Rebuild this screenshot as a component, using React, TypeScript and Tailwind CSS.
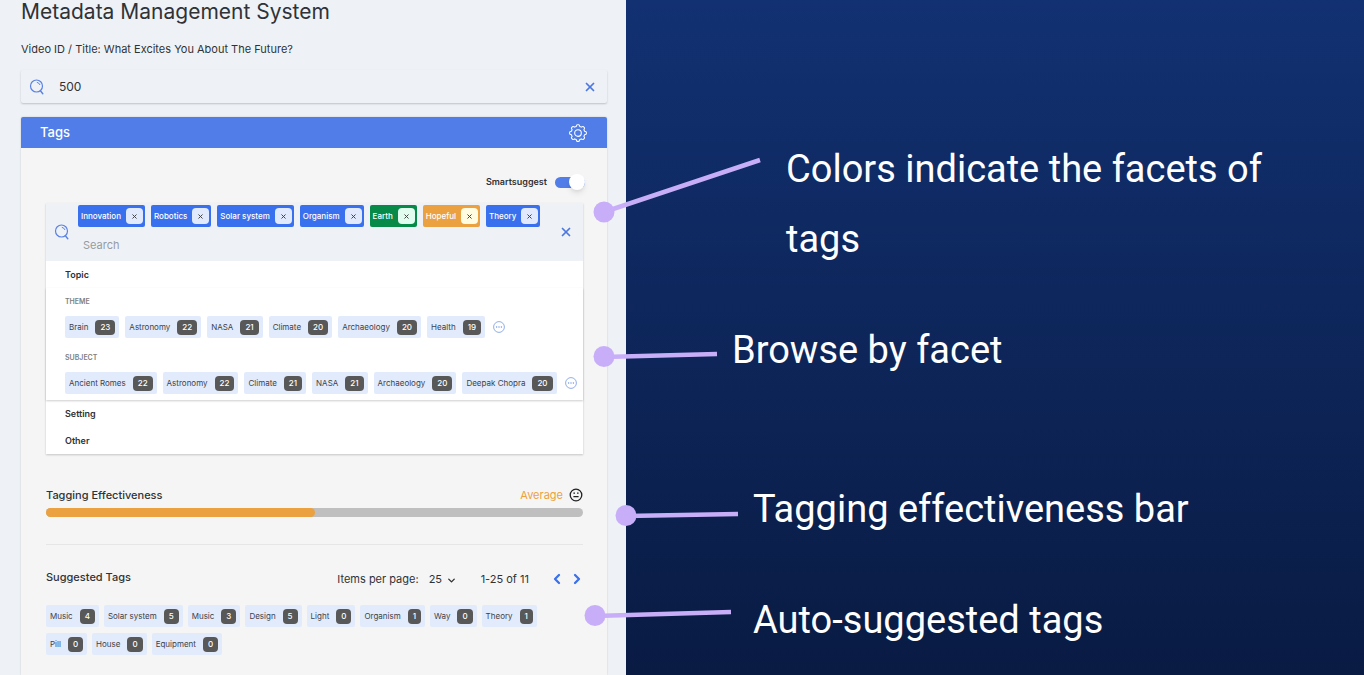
import type { ReactNode } from 'react';
import { ChevronDown, ChevronLeft, ChevronRight, X } from 'lucide-react';

type Count = [string, number];

const selected: { name: string; chip: string; close: string }[] = [
  { name: 'Innovation', chip: 'bg-[#3970ee]', close: 'bg-[#e0eafc]' },
  { name: 'Robotics', chip: 'bg-[#3970ee]', close: 'bg-[#e0eafc]' },
  { name: 'Solar system', chip: 'bg-[#3970ee]', close: 'bg-[#e0eafc]' },
  { name: 'Organism', chip: 'bg-[#3970ee]', close: 'bg-[#e0eafc]' },
  { name: 'Earth', chip: 'bg-[#078a48]', close: 'bg-[#e0fdf0]' },
  { name: 'Hopeful', chip: 'bg-[#eba13f]', close: 'bg-[#fffce2]' },
  { name: 'Theory', chip: 'bg-[#3970ee]', close: 'bg-[#e0eafc]' },
];

const themes: Count[] = [['Brain', 23], ['Astronomy', 22], ['NASA', 21], ['Climate', 20], ['Archaeology', 20], ['Health', 19]];
const subjects: Count[] = [['Ancient Romes', 22], ['Astronomy', 22], ['Climate', 21], ['NASA', 21], ['Archaeology', 20], ['Deepak Chopra', 20]];
const suggested: Count[] = [
  ['Music', 4], ['Solar system', 5], ['Music', 3], ['Design', 5], ['Light', 0], ['Organism', 1],
  ['Way', 0], ['Theory', 1], ['Pill', 0], ['House', 0], ['Equipment', 0],
];

function SearchIcon() {
  return (
    <svg viewBox="0 0 16 16" className="size-4 shrink-0" fill="none" stroke="#5b82e3" strokeLinecap="round" aria-hidden="true">
      <circle cx="7.5" cy="7" r="6" strokeWidth="1.2" />
      <path d="M8.2 3.4a3.6 3.6 0 0 1 2.7 2.2" strokeWidth="1" />
      <path d="M11.6 12l2.2 2.8" strokeWidth="1.4" />
    </svg>
  );
}

function GearIcon() {
  return (
    <svg viewBox="0 0 24 24" className="size-5" fill="none" stroke="white" strokeWidth="1.3" strokeLinejoin="round" aria-hidden="true">
      <circle cx="12" cy="12" r="4" />
      <path d="M9.9 4.1Q10.300 2 11.100 2h1.800q.8 0 1.200 2.100l2 .8q1.700-1.200 2.300-.6l1.300 1.300q.6.6-.6 2.300l.8 2q2.100.4 2.100 1.200v1.800q0 .8-2.100 1.200l-.8 2q1.200 1.700.6 2.300l-1.300 1.300q-.6.6-2.300-.6l-2 .8q-.4 2.100-1.200 2.100h-1.800q-.8 0-1.200-2.100l-2-.8q-1.700 1.200-2.300.6l-1.300-1.300q-.6-.6.6-2.300l-.8-2Q2 13.700 2 12.900v-1.800q0-.8 2.100-1.200l.8-2q-1.200-1.700-.6-2.300l1.300-1.300q.6-.6 2.300.6z" />
    </svg>
  );
}

function MoreButton({ label }: { label: string }) {
  return (
    <button type="button" aria-label={label} className="ml-0.5 shrink-0">
      <svg viewBox="0 0 12 12" className="size-3" aria-hidden="true">
        <circle cx="6" cy="6" r="5.4" fill="none" stroke="#86a5e8" strokeWidth="0.9" />
        <g fill="#7395e4">
          <circle cx="3.6" cy="6" r="0.7" />
          <circle cx="6" cy="6" r="0.7" />
          <circle cx="8.4" cy="6" r="0.7" />
        </g>
      </svg>
    </button>
  );
}

function CountTag({ tag }: { tag: Count }) {
  return (
    <button type="button" className="flex h-[22px] shrink-0 items-center gap-[7px] rounded-xs bg-[#e1ebfc] px-1 text-[8px] text-[#3e4248]">
      {tag[0]}
      <span className="flex h-[15px] items-center rounded-sm bg-[#585858] px-[5px] font-medium text-white">{tag[1]}</span>
    </button>
  );
}

function Facet({ name, tags }: { name: string; tags: Count[] }) {
  return (
    <div>
      <h4 className="text-[7px] leading-3 font-semibold text-[#808080] uppercase">{name}</h4>
      <div className="mt-2 flex items-center gap-1.5">
        {tags.map((t) => <CountTag key={t[0]} tag={t} />)}
        <MoreButton label={`More ${name}`} />
      </div>
    </div>
  );
}

function Note({ className, children }: { className: string; children: ReactNode }) {
  return <p className={`text-[38px] leading-[70px] text-white ${className}`}>{children}</p>;
}

export default function App() {
  return (
    <div className="grid min-h-screen grid-cols-[626fr_738fr] bg-[#eef2f7]">
      <main className="flex flex-col pr-[19px] pl-[21px] font-['Inter',sans-serif] text-[#303236]">
        <h1 className="text-[21px] leading-6">Metadata Management System</h1>
        <p className="mt-4 text-[11px] leading-[18px]">Video ID / Title: What Excites You About The Future?</p>
        <div className="mt-3 flex h-[33px] items-center gap-3.5 rounded-xs pr-2.5 pl-2 shadow-[0_1px_2px_rgba(0,0,0,0.2)]">
          <SearchIcon />
          <input aria-label="Video ID" defaultValue="500" className="min-w-0 flex-1 bg-transparent text-[12px] outline-none" />
          <button type="button" aria-label="Clear video ID" className="text-[#4d78e0]"><X size={14} strokeWidth={3} /></button>
        </div>

        <section className="mt-3.5 flex flex-1 flex-col rounded-t-xs bg-[#f5f5f5] shadow-[0_0_2px_rgba(0,0,0,0.18)]">
          <header className="flex h-[31px] items-center justify-between rounded-t-xs bg-[#507de7] px-[19px] text-white">
            <h2 className="text-[13px] font-medium">Tags</h2>
            <button type="button" aria-label="Tag settings"><GearIcon /></button>
          </header>

          <div className="pt-[25px] pr-6 pb-5 pl-[25px]">
            <label className="-mr-0.5 flex h-[18px] items-center justify-end text-[9px] font-semibold">
              Smartsuggest
              <input type="checkbox" defaultChecked className="peer sr-only" />
              <span className="ml-2 flex h-[11px] w-[30px] items-center justify-start rounded-full bg-[#bfbfbf] peer-checked:justify-end peer-checked:bg-[#507de7]">
                <span className="size-4 shrink-0 rounded-full bg-white shadow-md" />
              </span>
            </label>

            <div className="mt-3 bg-white shadow-[0_1px_2px_rgba(0,0,0,0.2)]">
              <div className="flex h-[58px] items-center bg-[#eef2f7] pr-2.5 pl-2">
                <SearchIcon />
                <div className="ml-2 flex-1 pb-1.5">
                  <div className="flex gap-1.5">
                    {selected.map((t) => (
                      <span key={t.name} className={`flex h-[22px] items-center gap-[5px] rounded-xs pr-0.5 pl-[3px] text-[8px] font-medium text-white ${t.chip}`}>
                        {t.name}
                        <button type="button" aria-label={`Remove ${t.name}`} className={`flex h-4 w-[17px] items-center justify-center rounded-sm text-[#444] ${t.close}`}>
                          <X size={7} strokeWidth={3.4} />
                        </button>
                      </span>
                    ))}
                  </div>
                  <input aria-label="Search tags" placeholder="Search" className="mt-2.5 block h-4 w-full bg-transparent px-[5px] text-[11px] outline-none placeholder:text-[#969ba2]" />
                </div>
                <button type="button" aria-label="Clear tags" className="text-[#4d78e0]"><X size={14} strokeWidth={3} /></button>
              </div>
              <h3 className="px-[19px] text-[9px] leading-[27px] font-semibold">Topic</h3>
              <div className="flex flex-col gap-3.5 px-[19px] pt-2 pb-1.5 shadow-[0_1px_2px_rgba(0,0,0,0.2)]">
                <Facet name="Theme" tags={themes} />
                <Facet name="Subject" tags={subjects} />
              </div>
              <h3 className="px-[19px] text-[9px] leading-[27px] font-semibold">Setting</h3>
              <h3 className="px-[19px] text-[9px] leading-[27px] font-semibold">Other</h3>
            </div>

            <div className="mt-[33px] flex h-4 items-center justify-between text-[11px]">
              <h3 className="font-medium">Tagging Effectiveness</h3>
              <span className="flex items-center gap-1.5 text-[#eba13f]">
                Average
                <svg viewBox="0 0 14 14" className="size-3.5" fill="none" stroke="#222" aria-hidden="true">
                  <circle cx="7" cy="7" r="5.8" strokeWidth="1.3" />
                  <path d="M4.4 8.6h5.2M4.4 5.2h1.6M8 5.2h1.6" strokeWidth="1.3" />
                </svg>
              </span>
            </div>
            <div className="mt-[5px] h-[9px] overflow-hidden rounded-full bg-[#bfbfbf]">
              <div className="h-full w-1/2 rounded-r-full bg-[#eba13f]" />
            </div>
            <hr className="mt-[27px] border-[#e6e6e6]" />

            <div className="mt-[22px] flex h-5 items-center text-[11px]">
              <h3 className="flex-1 font-medium">Suggested Tags</h3>
              <div className="-mr-0.5 flex items-center pt-1">
                <label htmlFor="per-page">Items per page:</label>
                <div className="relative ml-2.5">
                  <select id="per-page" defaultValue="25" className="w-7 appearance-none bg-transparent outline-none">
                    <option>25</option>
                    <option>50</option>
                  </select>
                  <ChevronDown size={11} strokeWidth={3} className="pointer-events-none absolute top-1 right-0" />
                </div>
                <span className="ml-6">1-25 of 11</span>
                <button type="button" aria-label="Previous page" className="ml-5 text-[#3970ee]"><ChevronLeft size={16} strokeWidth={3.4} /></button>
                <button type="button" aria-label="Next page" className="ml-1 text-[#3970ee]"><ChevronRight size={16} strokeWidth={3.4} /></button>
              </div>
            </div>
            <div className="mt-[18px] flex flex-wrap gap-x-[5px] gap-y-1.5 pr-8">
              {suggested.map((t, i) => <CountTag key={i} tag={t} />)}
            </div>
          </div>
        </section>
      </main>

      <aside className="relative bg-linear-to-b from-[#123172] to-[#091b43] font-['Roboto',sans-serif]">
        <svg width="160" height="675" viewBox="0 0 160 675" className="absolute top-0 left-0 overflow-visible" stroke="#c8aef8" strokeWidth="4.5" fill="#c8aef8" aria-hidden="true">
          <path d="M-22 212 134 160M-22 357 91 354M0 516 112 514M-31 616 105 612" />
          <g stroke="none">
            <circle cx="-22" cy="212" r="10.5" />
            <circle cx="-22" cy="356.5" r="10.5" />
            <circle cx="0" cy="515.5" r="10.5" />
            <circle cx="-31" cy="615.5" r="10.5" />
          </g>
        </svg>
        <div className="pt-[134px]">
          <Note className="pr-16 pl-40">Colors indicate the facets of tags</Note>
          <Note className="mt-[41px] pl-[106px]">Browse by facet</Note>
          <Note className="mt-[89px] pl-[127px]">Tagging effectiveness bar</Note>
          <Note className="mt-[41px] pl-[127px]">Auto-suggested tags</Note>
        </div>
      </aside>
    </div>
  );
}
